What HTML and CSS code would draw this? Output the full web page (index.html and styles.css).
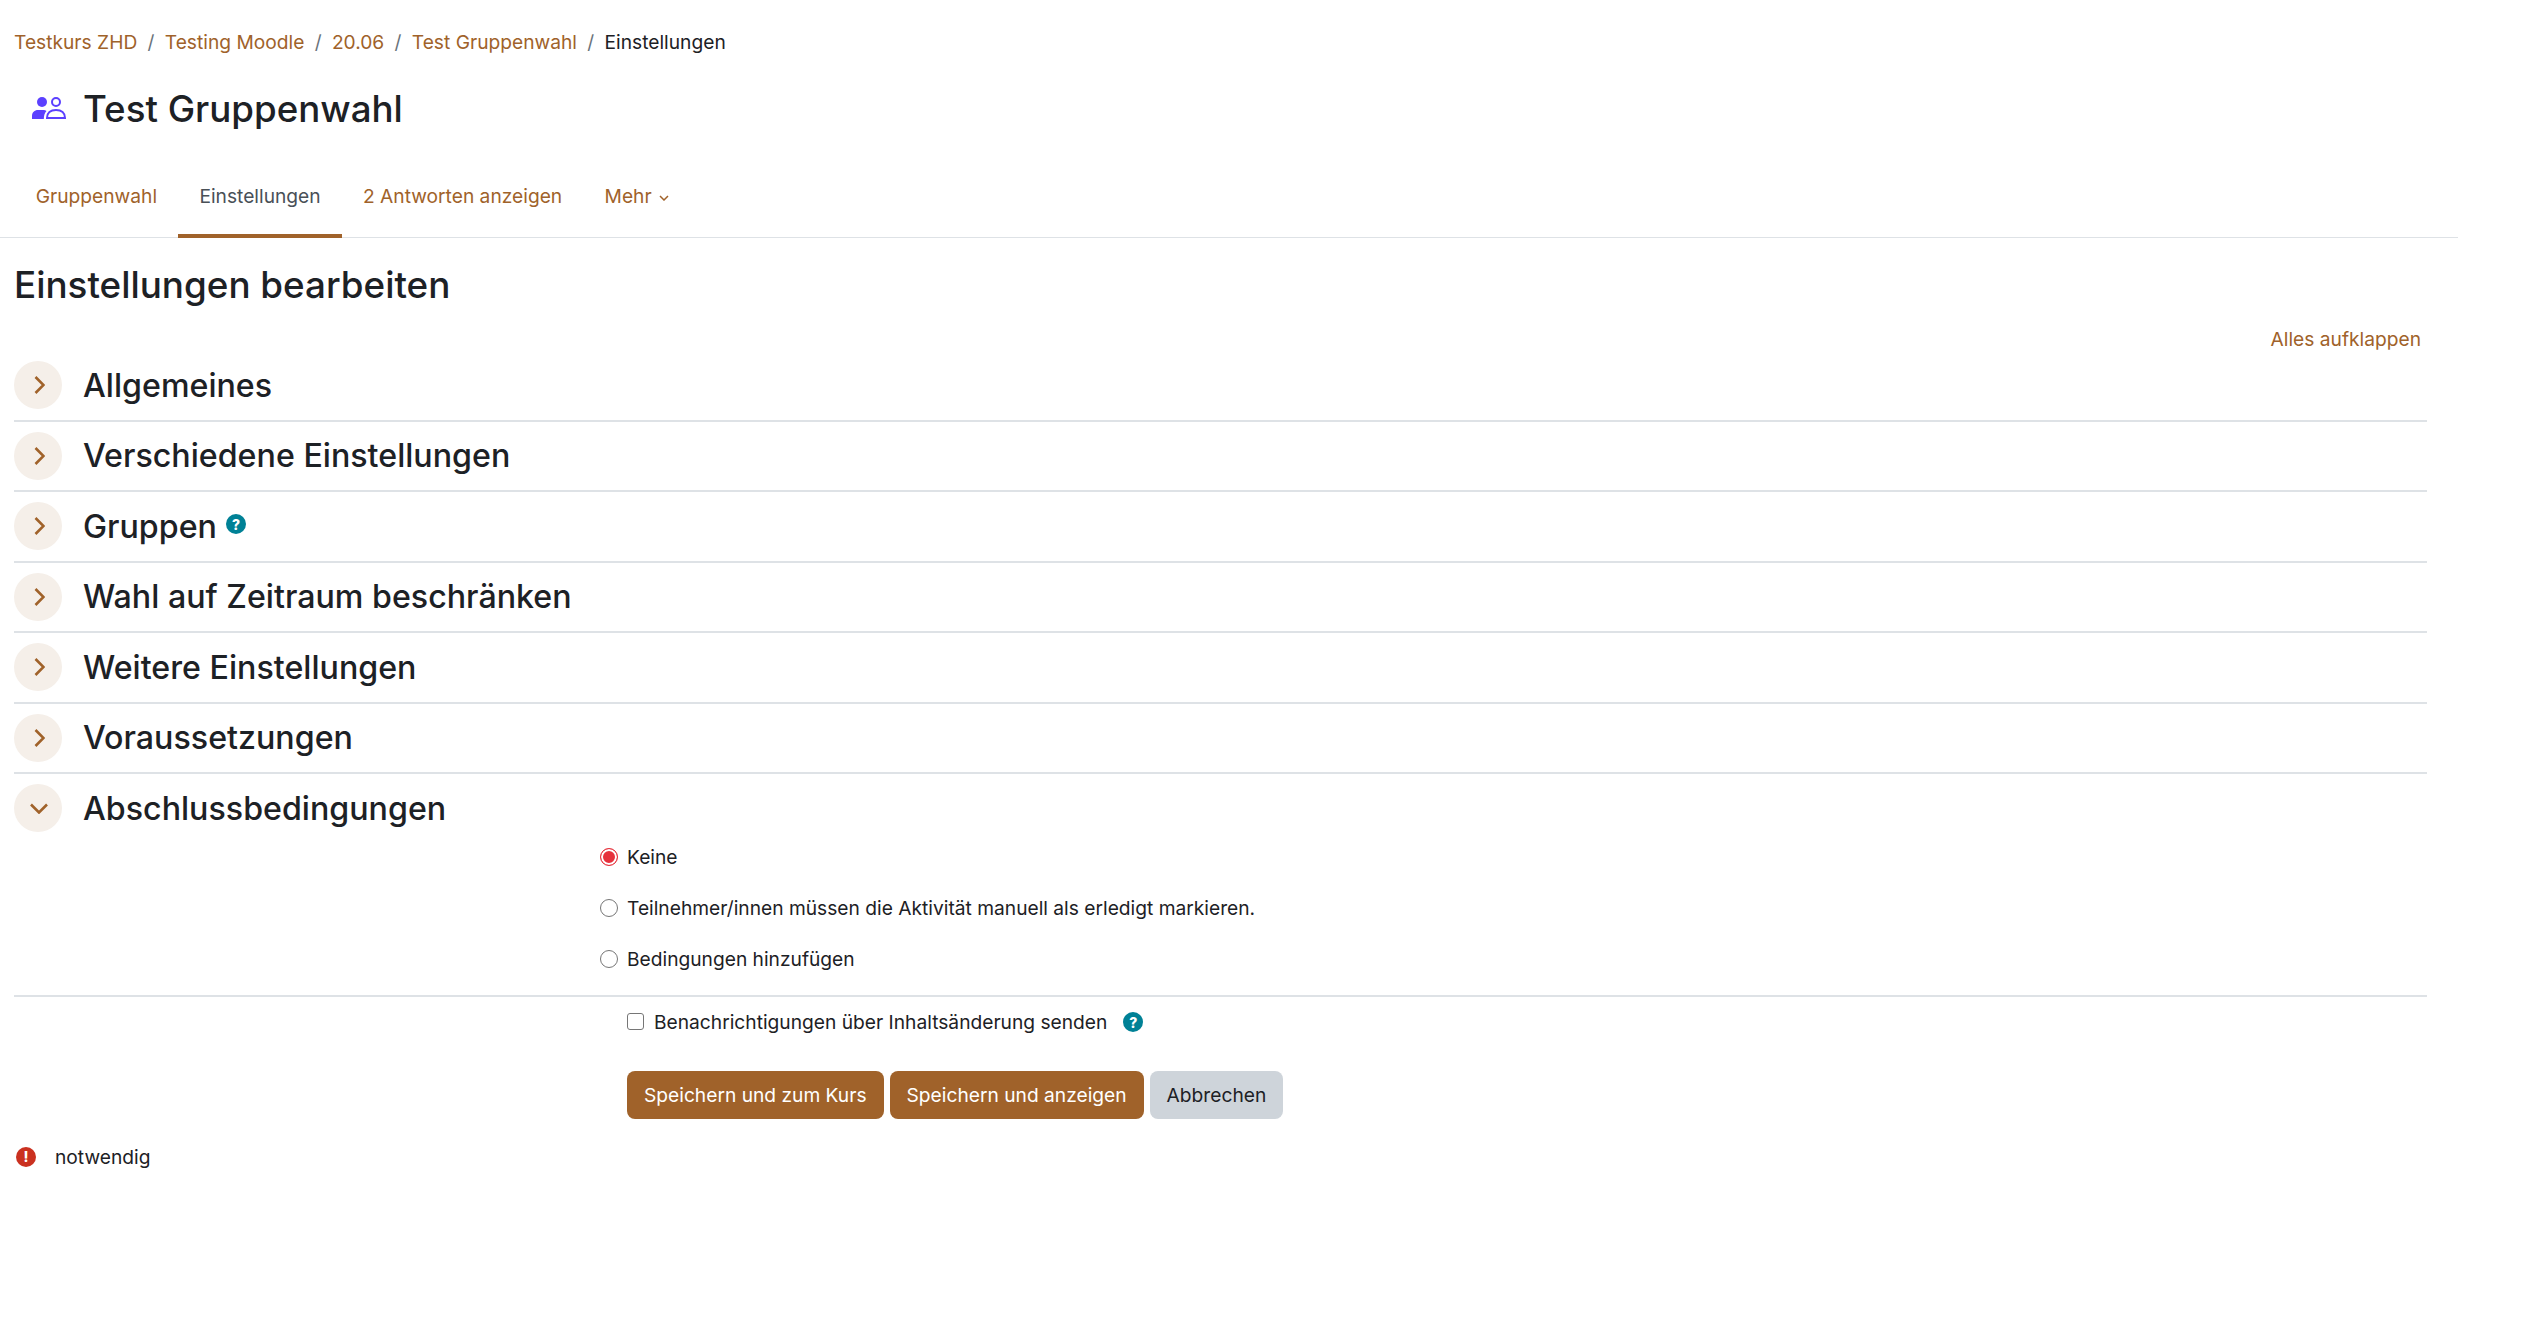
FILE: index.html
```html
<!DOCTYPE html>
<html lang="de">
<head>
  <meta charset="UTF-8">
  <title>Einstellungen bearbeiten</title>
  <link rel="stylesheet" href="styles.css">
</head>
<body>
  <div class="page">
    <nav class="breadcrumb">
      <a href="#">Testkurs ZHD</a><span class="sep">/</span>
      <a href="#">Testing Moodle</a><span class="sep">/</span>
      <a href="#">20.06</a><span class="sep">/</span>
      <a href="#">Test Gruppenwahl</a><span class="sep">/</span>
      <span>Einstellungen</span>
    </nav>
    <div class="title">
      <svg class="title-icon" viewBox="0 0 34 22">
        <circle cx="10" cy="5" r="5" fill="#5b40ff"/>
        <path d="M0 22v-3c0-3.500 2.500-6 6-6h5c1.500 0 2.500.3 3.500 1-1.800 1.800-2.500 4-2.700 8z" fill="#5b40ff"/>
        <circle cx="24" cy="5" r="4" fill="none" stroke="#5b40ff" stroke-width="2"/>
        <path d="M15 21c0-5 3.500-8 9-8s9 3 9 8z" fill="none" stroke="#5b40ff" stroke-width="2"/>
      </svg>
      <h1>Test Gruppenwahl</h1>
    </div>
    <ul class="tabs">
      <li><a href="#">Gruppenwahl</a></li>
      <li class="active"><a href="#">Einstellungen</a></li>
      <li><a href="#">2 Antworten anzeigen</a></li>
      <li><a href="#">Mehr
        <svg class="caret" viewBox="0 0 10 6"><path d="M1 1l4 4 4-4" fill="none" stroke="#a0622a" stroke-width="1.500"/></svg>
      </a></li>
    </ul>
  </div>

  <main class="content">
    <h2>Einstellungen bearbeiten</h2>
    <div class="expand-all"><a href="#">Alles aufklappen</a></div>

    <section class="sect">
      <span class="toggle"><svg viewBox="0 0 11 18"><path d="M1.500 1l8 8-8 8" fill="none" stroke="#a0622a" stroke-width="2.600"/></svg></span>
      <h3>Allgemeines</h3>
    </section>
    <section class="sect">
      <span class="toggle"><svg viewBox="0 0 11 18"><path d="M1.500 1l8 8-8 8" fill="none" stroke="#a0622a" stroke-width="2.600"/></svg></span>
      <h3>Verschiedene Einstellungen</h3>
    </section>
    <section class="sect">
      <span class="toggle"><svg viewBox="0 0 11 18"><path d="M1.500 1l8 8-8 8" fill="none" stroke="#a0622a" stroke-width="2.600"/></svg></span>
      <h3>Gruppen</h3>
      <span class="help help-up">?</span>
    </section>
    <section class="sect">
      <span class="toggle"><svg viewBox="0 0 11 18"><path d="M1.500 1l8 8-8 8" fill="none" stroke="#a0622a" stroke-width="2.600"/></svg></span>
      <h3>Wahl auf Zeitraum beschränken</h3>
    </section>
    <section class="sect">
      <span class="toggle"><svg viewBox="0 0 11 18"><path d="M1.500 1l8 8-8 8" fill="none" stroke="#a0622a" stroke-width="2.600"/></svg></span>
      <h3>Weitere Einstellungen</h3>
    </section>
    <section class="sect">
      <span class="toggle"><svg viewBox="0 0 11 18"><path d="M1.500 1l8 8-8 8" fill="none" stroke="#a0622a" stroke-width="2.600"/></svg></span>
      <h3>Voraussetzungen</h3>
    </section>
    <section class="sect open">
      <span class="toggle"><svg class="down" viewBox="0 0 18 11"><path d="M1 1.500l8 8 8-8" fill="none" stroke="#a0622a" stroke-width="2.600"/></svg></span>
      <h3>Abschlussbedingungen</h3>
    </section>

    <div class="options">
      <label class="option"><input type="radio" name="completion" checked>Keine</label>
      <label class="option"><input type="radio" name="completion">Teilnehmer/innen müssen die Aktivität manuell als erledigt markieren.</label>
      <label class="option"><input type="radio" name="completion">Bedingungen hinzufügen</label>
    </div>

    <div class="notify">
      <label class="check"><input type="checkbox">Benachrichtigungen über Inhaltsänderung senden</label>
      <span class="help">?</span>
    </div>

    <div class="buttons">
      <button class="btn primary">Speichern und zum Kurs</button>
      <button class="btn primary">Speichern und anzeigen</button>
      <button class="btn secondary">Abbrechen</button>
    </div>

    <div class="required">
      <span class="req-icon">!</span>
      <span>notwendig</span>
    </div>
  </main>
</body>
</html>
```

FILE: styles.css
```css
html, body {
  margin: 0;
  padding: 0;
}

body {
  font-family: "Inter", sans-serif;
  font-size: 19.200px;
  color: #1d2125;
  background: #fff;
}

a {
  color: #a0622a;
  text-decoration: none;
}

.page {
  width: 2458px;
}

.breadcrumb {
  display: flex;
  align-items: center;
  height: 30px;
  padding: 27px 0 0 14px;
}

.sep {
  color: #6a737b;
  margin: 0 10.300px;
}

.title {
  display: flex;
  align-items: center;
  height: 60px;
  margin-top: 21px;
  padding-left: 32px;
}

.title-icon {
  width: 34px;
  height: 22px;
  margin-right: 17px;
}

h1 {
  font-size: 36.700px;
  font-weight: 450;
  margin: 0;
}

.tabs {
  display: flex;
  list-style: none;
  margin: 28px 0 0;
  padding: 0 0 0 14.500px;
  border-bottom: 1px solid #dee2e6;
}

.tabs li {
  padding: 0 21.200px;
  height: 72px;
  line-height: 60px;
  margin-bottom: -1px;
  border-bottom: 4px solid transparent;
  box-sizing: border-box;
}

.tabs li.active {
  border-bottom-color: #a0622a;
}

.tabs li.active a {
  color: #495057;
}

.caret {
  width: 10px;
  height: 6px;
  margin-left: 2px;
  vertical-align: 2px;
}

.content {
  width: 2413px;
  padding-left: 14px;
}

h2 {
  font-size: 36.800px;
  font-weight: 450;
  line-height: 48px;
  margin: 23px 0 0;
}

.expand-all {
  text-align: right;
  padding-right: 6px;
  line-height: 24px;
  margin-top: 18px;
}

.sect {
  display: flex;
  align-items: center;
  height: 70.500px;
  box-sizing: border-box;
  border-bottom: 2px solid #dee2e6;
}

.sect.open {
  border-bottom-color: transparent;
}

.toggle {
  display: flex;
  align-items: center;
  justify-content: center;
  flex: none;
  width: 48px;
  height: 48px;
  border-radius: 50%;
  background: #f5efe9;
  margin-right: 21px;
}

.toggle svg {
  width: 11px;
  height: 18px;
  margin-left: 3px;
}

.toggle svg.down {
  width: 18px;
  height: 11px;
  margin: 1px 0 0 1px;
}

h3 {
  font-size: 32.200px;
  font-weight: 450;
  margin: 0;
}

.help {
  display: inline-flex;
  align-items: center;
  justify-content: center;
  width: 20px;
  height: 20px;
  border-radius: 50%;
  background: #008196;
  color: #fff;
  font-size: 14px;
  font-weight: 800;
}

.help-up {
  margin: -4px 0 0 9px;
}

.options {
  border-bottom: 2px solid #dee2e6;
  padding: 0 0 10px 586px;
  margin-top: -13px;
}

.option {
  display: flex;
  align-items: center;
  height: 51px;
}

input[type="radio"] {
  appearance: none;
  width: 18px;
  height: 18px;
  margin: 0 9px 0 0;
  border: 1.500px solid #767676;
  border-radius: 50%;
  background: #fff;
  box-sizing: border-box;
}

input[type="radio"]:checked {
  border: 1.500px solid #e6313c;
  box-shadow: inset 0 0 0 2px #fff;
  background: #e6313c;
}

.notify {
  display: flex;
  align-items: center;
  height: 51px;
  padding-left: 613px;
}

.check {
  display: flex;
  align-items: center;
}

input[type="checkbox"] {
  appearance: none;
  width: 17px;
  height: 17px;
  margin: -2px 10px 0 0;
  border: 1.500px solid #767676;
  border-radius: 3px;
  background: #fff;
  box-sizing: border-box;
}

.notify .help {
  margin-left: 16px;
}

.buttons {
  display: flex;
  gap: 6px;
  margin-top: 23px;
  padding-left: 613px;
}

.btn {
  height: 48px;
  padding: 0 17px;
  border: 0;
  border-radius: 8px;
  font-family: "Inter", sans-serif;
  font-size: 19.200px;
}

.primary {
  background: #a0622a;
  color: #fff;
}

.secondary {
  background: #ced4da;
  color: #1d2125;
}

.required {
  display: flex;
  align-items: center;
  margin-top: 26px;
  height: 24px;
  padding-left: 2px;
}

.req-icon {
  display: inline-flex;
  align-items: center;
  justify-content: center;
  width: 20px;
  height: 20px;
  border-radius: 50%;
  background: #ca3120;
  color: #fff;
  font-size: 14px;
  font-weight: 800;
  margin-right: 19px;
}
```
